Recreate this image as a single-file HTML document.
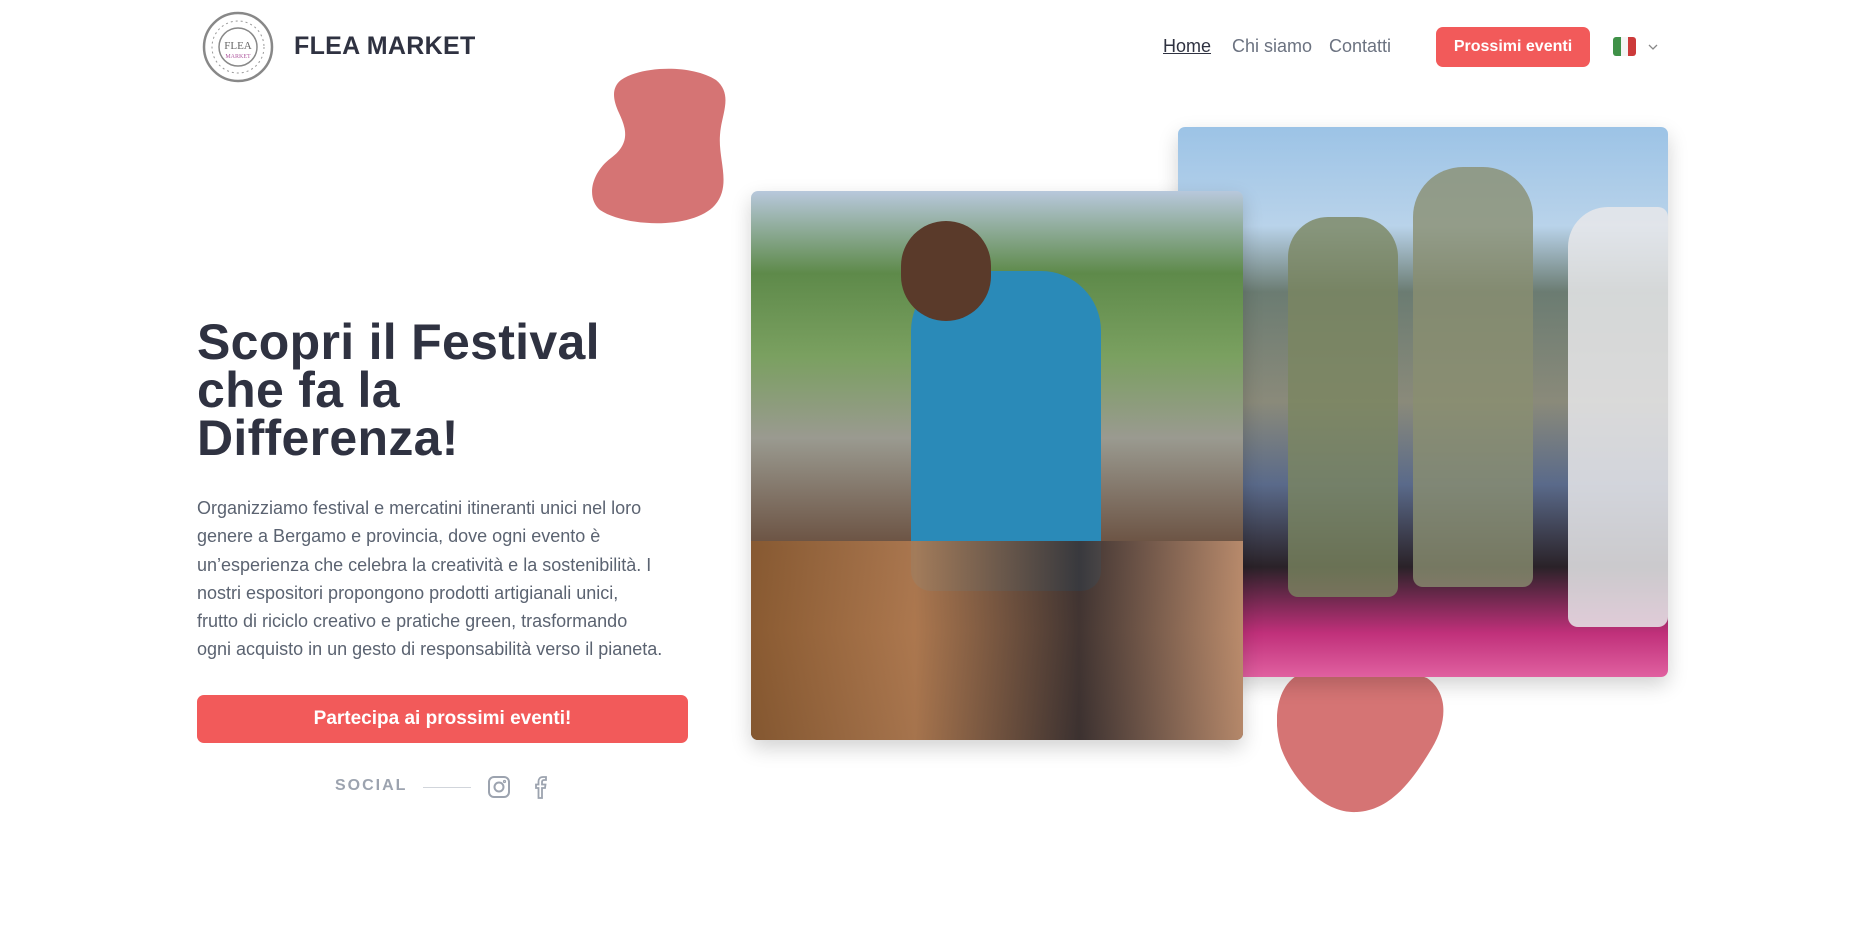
<!DOCTYPE html>
<html><head><meta charset="utf-8"><style>
*{margin:0;padding:0;box-sizing:border-box}
body{width:1876px;height:932px;background:#fff;position:relative;overflow:hidden;font-family:"Liberation Sans",sans-serif}
.a{position:absolute}
.brand{left:294px;top:32px;font-size:25px;font-weight:bold;color:#2f3241;letter-spacing:0.3px}
.nav{top:36px;font-size:18px;color:#6b7280}
.btn{background:#f25a5a;color:#fff;font-weight:bold;border-radius:7px;display:flex;align-items:center;justify-content:center}
h1{position:absolute;left:197px;top:318px;font-size:50px;line-height:48px;color:#2f3241;font-weight:bold;letter-spacing:0.3px}
p{position:absolute;left:197px;top:494px;width:520px;font-size:18px;line-height:28.3px;color:#5b6371;white-space:nowrap}
.img{border-radius:7px;overflow:hidden;box-shadow:0 8px 20px rgba(0,0,0,.18)}
</style></head><body>
<svg class="a" style="left:202px;top:11px" width="72" height="72" viewBox="0 0 72 72">
<circle cx="36" cy="36" r="34" fill="#fff" stroke="#888" stroke-width="2.5"/>
<circle cx="36" cy="36" r="26" fill="none" stroke="#999" stroke-width="1" stroke-dasharray="2 3"/>
<circle cx="36" cy="36" r="19" fill="none" stroke="#888" stroke-width="1.5"/>
<text x="36" y="38" font-size="11" text-anchor="middle" fill="#666" font-family="Liberation Serif">FLEA</text>
<text x="36" y="47" font-size="6" text-anchor="middle" fill="#b05aa0" font-family="Liberation Serif">MARKET</text>
</svg>
<div class="a brand">FLEA MARKET</div>
<div class="a nav" style="left:1163px;color:#2f3241;text-decoration:underline">Home</div>
<div class="a nav" style="left:1232px">Chi siamo</div>
<div class="a nav" style="left:1329px">Contatti</div>
<div class="a btn" style="left:1436px;top:27px;width:154px;height:40px;font-size:16px">Prossimi eventi</div>
<div class="a" style="left:1613px;top:37px;width:23px;height:19px;border-radius:3px;overflow:hidden;display:flex"><div style="flex:1;background:#3f9148"></div><div style="flex:1;background:#f4f4f4"></div><div style="flex:1;background:#cc3a3a"></div></div>
<svg class="a" style="left:1648px;top:43px" width="10" height="8"><path d="M1 2l4 4 4-4" fill="none" stroke="#888" stroke-width="1.3"/></svg>
<svg class="a" style="left:591px;top:68px" width="138" height="158" viewBox="0 0 138 158"><path d="M30 12C50-2 100-4 125 12c18 15 5 35 4 55-2 25 12 50-5 70-22 25-90 22-115 5C-5 130 0 105 20 90 40 75 35 60 28 45 22 32 20 20 30 12Z" fill="#d57474"/></svg>
<svg class="a" style="left:1277px;top:668px" width="168" height="146" viewBox="0 0 168 146"><path d="M25 5C60-3 120-2 150 10c22 15 20 45 5 70-18 30-40 62-75 64C45 146 15 110 4 80-5 50 0 15 25 5Z" fill="#d57474"/></svg>
<div class="a img" style="left:1178px;top:127px;width:490px;height:550px;background:linear-gradient(180deg,#9cc3e6 0%,#b9d3ea 18%,#6b7c72 30%,#8a8a7a 50%,#5a6a8a 65%,#2a2228 80%,#c0307a 92%,#e060a0 100%)">
<div class="a" style="left:110px;top:90px;width:110px;height:380px;background:#7a8660;border-radius:40px 40px 10px 10px;opacity:.8"></div>
<div class="a" style="left:235px;top:40px;width:120px;height:420px;background:#8a8f70;border-radius:50px 50px 10px 10px;opacity:.8"></div>
<div class="a" style="left:390px;top:80px;width:100px;height:420px;background:#e8e8ea;border-radius:40px 10px 10px 10px;opacity:.85"></div>
</div>
<div class="a img" style="left:751px;top:191px;width:492px;height:549px;background:linear-gradient(180deg,#b8c8dc 0%,#5e8a4a 15%,#7aa060 30%,#9a9a90 45%,#6a5040 65%,#8a6040 80%,#4a3a30 100%)">
<div class="a" style="left:160px;top:80px;width:190px;height:320px;background:#2a8ab8;border-radius:60px 60px 20px 20px"></div>
<div class="a" style="left:150px;top:30px;width:90px;height:100px;background:#5a3a2a;border-radius:45px"></div>
<div class="a" style="left:0;top:350px;width:492px;height:199px;background:linear-gradient(90deg,#8a5a30,#b07a50,#3a3030,#c09070);opacity:.9"></div>
</div>
<h1>Scopri il Festival<br>che fa la<br>Differenza!</h1>
<p>Organizziamo festival e mercatini itineranti unici nel loro<br>genere a Bergamo e provincia, dove ogni evento è<br>un’esperienza che celebra la creatività e la sostenibilità. I<br>nostri espositori propongono prodotti artigianali unici,<br>frutto di riciclo creativo e pratiche green, trasformando<br>ogni acquisto in un gesto di responsabilità verso il pianeta.</p>
<div class="a btn" style="left:197px;top:695px;width:491px;height:48px;font-size:19px">Partecipa ai prossimi eventi!</div>
<div class="a" style="left:335px;top:777px;font-size:16px;font-weight:bold;color:#9ca3af;letter-spacing:2px">SOCIAL</div>
<div class="a" style="left:423px;top:787px;width:48px;height:1px;background:#d1d5db"></div>
<svg class="a" style="left:487px;top:775px" width="24" height="24" viewBox="0 0 24 24" fill="none" stroke="#9ca3af" stroke-width="2"><rect x="2" y="2" width="20" height="20" rx="5"/><circle cx="12" cy="12" r="4.5"/><circle cx="17.5" cy="6.5" r=".6"/></svg>
<svg class="a" style="left:530px;top:775px" width="20" height="24" viewBox="0 0 20 24" fill="none" stroke="#9ca3af" stroke-width="1.8"><path d="M12 23V13h3l.5-3.5H12V7c0-1 .4-2 2-2h2V2h-3c-3 0-4.5 2-4.5 4.5v3H6V13h2.5v10z"/></svg>
</body></html>
